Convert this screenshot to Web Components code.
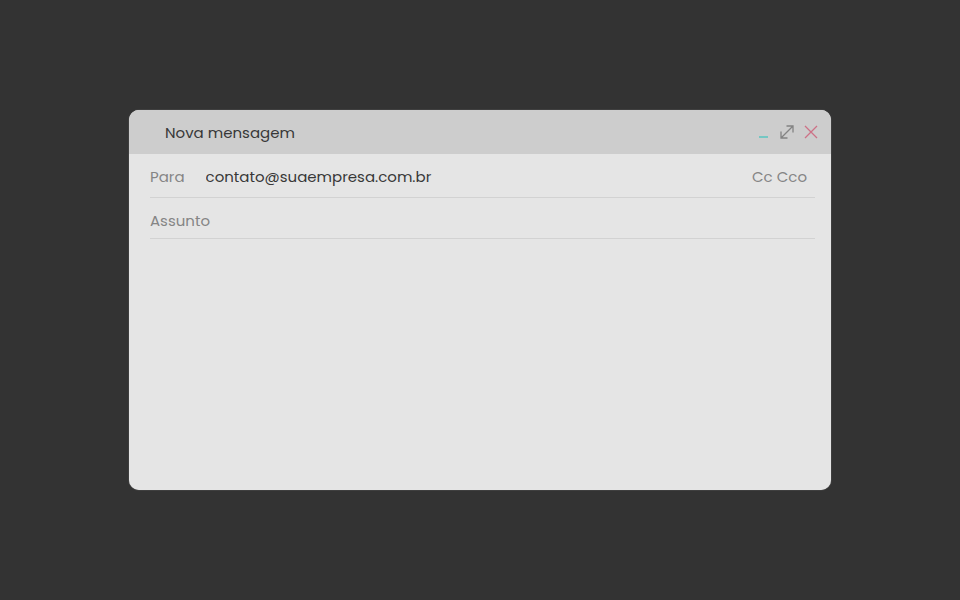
<!DOCTYPE html>
<html lang="pt-BR">
<head>
<meta charset="utf-8">
<meta name="viewport" content="width=device-width, initial-scale=1">
<title>Nova mensagem</title>
<style>
  * { box-sizing: border-box; }
  body {
    margin: 0; min-height: 100vh; padding: 110px 129px;
    display: flex; background: #333;
    font: 15px/24px Poppins, Inter, sans-serif; color: #383838;
    --muted: #858585; --line: #d2d2d2;
  }
</style>
</head>
<body>
<compose-window heading="Nova mensagem">
  <compose-field label="Para" name="to" type="email" value="contato@suaempresa.com.br">
    <copy-links slot="actions"></copy-links>
  </compose-field>
  <compose-field label="Assunto" name="subject" type="text"></compose-field>
</compose-window>

<template id="window-template">
  <style>
    * { box-sizing: border-box; }
    :host { flex: 1; min-width: 0; display: flex; flex-direction: column; overflow: hidden;
      border-radius: 10px; background: #e5e5e5; box-shadow: 0 0 1px #aaa; }
    header { display: flex; align-items: center; justify-content: space-between;
      min-height: 44px; padding: 0 12px 0 36px; background: #cdcdcd; }
    h1 { margin: 0; padding-top: 2px; font: inherit; }
    main { flex: 1; display: flex; flex-direction: column; padding: 0 16px 16px 21px; }
    textarea { flex: 1; margin-top: 8px; padding: 0; border: 0; outline: 0; resize: none;
      background: none; font: inherit; color: inherit; }
  </style>
  <header><h1></h1><window-controls></window-controls></header>
  <main><slot></slot><textarea aria-label="Mensagem"></textarea></main>
</template>

<template id="controls-template">
  <style>
    :host { display: flex; gap: 8px; }
    button { display: flex; padding: 0; border: 0; background: none; cursor: pointer; }
    svg { width: 16px; height: 16px; fill: none; }
  </style>
  <button type="button" aria-label="Minimizar"><svg viewBox="0 0 16 16"><path d="M4 13H13" stroke="#75c7c3" stroke-width="2"/></svg></button>
  <button type="button" aria-label="Expandir"><svg viewBox="0 0 16 16"><path d="M2 14L14 2M7.5 2H14V8.5M2 7.5V14H8.5" stroke="#838383" stroke-width="1.3"/></svg></button>
  <button type="button" aria-label="Fechar"><svg viewBox="0 0 16 16"><path d="M2 2L14 14M14 2L2 14" stroke="#cd7186" stroke-width="1.3"/></svg></button>
</template>

<template id="field-template">
  <style>
    :host { display: flex; align-items: center; gap: 21px; padding: 11px 8px 8px 0;
      border-bottom: 1px solid var(--line); }
    :host([name="subject"]) { padding-bottom: 5px; }
    label { color: var(--muted); }
    input { flex: 1; min-width: 0; height: 24px; padding: 0; border: 0; outline: 0;
      background: none; font: inherit; color: inherit; }
  </style>
  <label for="field"></label><input id="field"><slot name="actions"></slot>
</template>

<template id="copy-template">
  <style>
    :host { display: flex; gap: 4px; }
    button { padding: 0; border: 0; background: none; font: inherit; color: var(--muted); cursor: pointer; }
  </style>
  <button type="button">Cc</button><button type="button">Cco</button>
</template>

<script>
  class TemplateElement extends HTMLElement {
    mount(id) {
      const root = this.attachShadow({ mode: 'open' });
      root.append(document.getElementById(id).content.cloneNode(true));
      return root;
    }
  }
  customElements.define('compose-window', class extends TemplateElement {
    constructor() {
      super();
      this.mount('window-template').querySelector('h1').textContent = this.getAttribute('heading');
    }
  });
  customElements.define('window-controls', class extends TemplateElement {
    constructor() { super(); this.mount('controls-template'); }
  });
  customElements.define('compose-field', class extends TemplateElement {
    constructor() {
      super();
      const root = this.mount('field-template');
      root.querySelector('label').textContent = this.getAttribute('label');
      const input = root.querySelector('input');
      input.type = this.getAttribute('type');
      input.name = this.getAttribute('name');
      input.value = this.getAttribute('value') || '';
    }
  });
  customElements.define('copy-links', class extends TemplateElement {
    constructor() { super(); this.mount('copy-template'); }
  });
</script>
</body>
</html>
